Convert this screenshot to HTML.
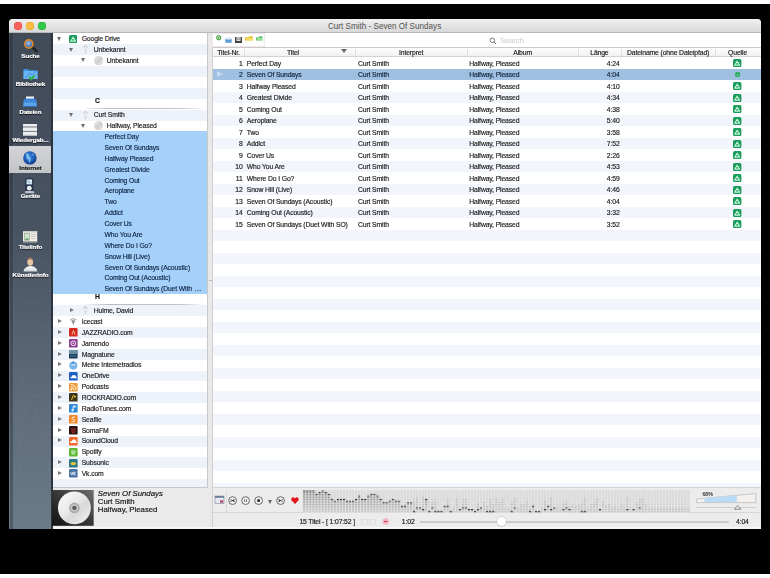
<!DOCTYPE html><html><head><meta charset="utf-8"><style>
*{margin:0;padding:0;box-sizing:border-box}
html,body{width:770px;height:578px;overflow:hidden;background:#000}
body{position:relative;font-family:"Liberation Sans",sans-serif;color:#1c1c1c}
.a{position:absolute}
.t{position:absolute;white-space:nowrap;font-size:6.8px;letter-spacing:-0.12px;line-height:8px;-webkit-text-stroke:0.16px currentColor}
.tri-d{position:absolute;width:0;height:0;border-left:2.9px solid transparent;border-right:2.9px solid transparent;border-top:4.6px solid #707070}
.tri-r{position:absolute;width:0;height:0;border-top:2.7px solid transparent;border-bottom:2.7px solid transparent;border-left:4.4px solid #7a7a7a}
.ic{position:absolute;width:8.5px;height:8.5px;border-radius:1.5px}
.sl{position:absolute;left:10px;width:41px;text-align:center;color:#fff;font-weight:bold;font-size:6.2px;line-height:7px;letter-spacing:-0.05px;-webkit-text-stroke:0.2px currentColor;text-shadow:0 0.5px 0.8px rgba(0,0,0,.9)}
</style></head><body><div style="position:absolute;left:0;top:0;width:770px;height:578px;filter:blur(0.35px)">
<div class="a" style="left:0;top:0;width:770px;height:3.7px;background:#fcfcfc"></div>
<div class="a" style="left:0;top:574.0px;width:770px;height:4px;background:#fcfcfc"></div>
<div class="a" style="left:9.3px;top:19.3px;width:751.3000000000001px;height:509.90000000000003px;background:#ececec;border-radius:4px 4px 0 0;overflow:hidden">
</div>
<div class="a" style="left:9.3px;top:19.3px;width:751.3000000000001px;height:13.599999999999998px;background:linear-gradient(#f0f0f0,#d9d9d9);border-radius:4px 4px 0 0;border-bottom:1px solid #b9b9b9"></div>
<div class="a" style="left:14.2px;top:22.400000000000002px;width:7.4px;height:7.4px;border-radius:50%;background:#fc605c;box-shadow:inset 0 0 0 0.4px #df4744"></div>
<div class="a" style="left:26.3px;top:22.400000000000002px;width:7.4px;height:7.4px;border-radius:50%;background:#fdbc40;box-shadow:inset 0 0 0 0.4px #de9f34"></div>
<div class="a" style="left:38.4px;top:22.400000000000002px;width:7.4px;height:7.4px;border-radius:50%;background:#34c84a;box-shadow:inset 0 0 0 0.4px #27aa35"></div>
<div class="t" style="left:327.9px;top:22.1px;font-size:8.14px;line-height:10px;letter-spacing:0;color:#505050;-webkit-text-stroke:0">Curt Smith - Seven Of Sundays</div>
<div class="a" style="left:9.3px;top:32.9px;width:42.7px;height:496.30000000000007px;background:linear-gradient(#414a57 0%,#485362 40%,#5e6c7b 75%,#6b7a89 100%)"></div>
<div class="a" style="left:51.0px;top:32.9px;width:1.6px;height:496.30000000000007px;background:#2e343c"></div>
<svg class="a" style="left:9.6px;top:32.9px" width="41.4" height="496" viewBox="0 0 41.4 496"><rect x="0" y="0" width="3.2" height="496" fill="#1e242c" opacity=".35"/><rect x="3.2" y="0" width="0.8" height="496" fill="#8a96a4" opacity=".18"/><g fill="none" stroke="#aab6c4" stroke-width=".7" opacity=".09"><path d="M2 60 q18 -20 40 5"/><path d="M0 110 q20 30 42 -10"/><path d="M4 170 q10 -30 38 -10"/><path d="M0 230 q25 -15 42 10"/><path d="M6 262 q15 20 36 -8"/><path d="M0 300 q18 -25 42 0"/><path d="M10 340 q10 40 32 10"/><path d="M0 380 q22 -30 42 -5"/><path d="M20 360 q-12 40 -10 80"/><path d="M24 370 q8 40 18 70"/><path d="M0 450 q20 -20 42 5"/><path d="M4 480 q20 -15 38 0"/></g></svg>
<div class="a" style="left:9.3px;top:146px;width:41.7px;height:27px;background:linear-gradient(#d3d4d7,#c2c4c8)"></div>
<div class="sl" style="top:51.70px;">Suche</div>
<div class="sl" style="top:80.40px;">Bibliothek</div>
<div class="sl" style="top:108.00px;">Dateien</div>
<div class="sl" style="top:136.10px;">Wiedergab...</div>
<div class="sl" style="top:164.10px;color:#1a1a1a;text-shadow:0 0.5px 0 rgba(255,255,255,.4);">Internet</div>
<div class="sl" style="top:192.40px;">Geräte</div>
<div class="sl" style="top:242.80px;">Titelinfo</div>
<div class="sl" style="top:271.00px;">Künstlerinfo</div>
<div class="a" style="left:53.0px;top:32.9px;width:154.5px;height:455.3px;background:#fff;overflow:hidden;border-bottom:1px solid #c8c8c8">
<div class="a" style="left:0;top:0.73px;width:160px;height:10.92px;background:#fff"></div>
<div class="a" style="left:0;top:11.60px;width:160px;height:10.92px;background:#eef3fb"></div>
<div class="a" style="left:0;top:22.46px;width:160px;height:10.92px;background:#fff"></div>
<div class="a" style="left:0;top:33.33px;width:160px;height:10.92px;background:#eef3fb"></div>
<div class="a" style="left:0;top:44.20px;width:160px;height:10.92px;background:#fff"></div>
<div class="a" style="left:0;top:55.07px;width:160px;height:10.92px;background:#eef3fb"></div>
<div class="a" style="left:0;top:65.93px;width:160px;height:10.92px;background:#fff"></div>
<div class="a" style="left:0;top:76.80px;width:160px;height:10.92px;background:#eef3fb"></div>
<div class="a" style="left:0;top:87.67px;width:160px;height:10.92px;background:#fff"></div>
<div class="a" style="left:0;top:98.53px;width:160px;height:10.92px;background:#a5d0fa"></div>
<div class="a" style="left:0;top:109.40px;width:160px;height:10.92px;background:#a5d0fa"></div>
<div class="a" style="left:0;top:120.27px;width:160px;height:10.92px;background:#a5d0fa"></div>
<div class="a" style="left:0;top:131.13px;width:160px;height:10.92px;background:#a5d0fa"></div>
<div class="a" style="left:0;top:142.00px;width:160px;height:10.92px;background:#a5d0fa"></div>
<div class="a" style="left:0;top:152.87px;width:160px;height:10.92px;background:#a5d0fa"></div>
<div class="a" style="left:0;top:163.74px;width:160px;height:10.92px;background:#a5d0fa"></div>
<div class="a" style="left:0;top:174.60px;width:160px;height:10.92px;background:#a5d0fa"></div>
<div class="a" style="left:0;top:185.47px;width:160px;height:10.92px;background:#a5d0fa"></div>
<div class="a" style="left:0;top:196.34px;width:160px;height:10.92px;background:#a5d0fa"></div>
<div class="a" style="left:0;top:207.20px;width:160px;height:10.92px;background:#a5d0fa"></div>
<div class="a" style="left:0;top:218.07px;width:160px;height:10.92px;background:#a5d0fa"></div>
<div class="a" style="left:0;top:228.94px;width:160px;height:10.92px;background:#a5d0fa"></div>
<div class="a" style="left:0;top:239.80px;width:160px;height:10.92px;background:#a5d0fa"></div>
<div class="a" style="left:0;top:250.67px;width:160px;height:10.92px;background:#a5d0fa"></div>
<div class="a" style="left:0;top:261.54px;width:160px;height:10.92px;background:#fff"></div>
<div class="a" style="left:0;top:272.41px;width:160px;height:10.92px;background:#eef3fb"></div>
<div class="a" style="left:0;top:283.27px;width:160px;height:10.92px;background:#fff"></div>
<div class="a" style="left:0;top:294.14px;width:160px;height:10.92px;background:#eef3fb"></div>
<div class="a" style="left:0;top:305.01px;width:160px;height:10.92px;background:#fff"></div>
<div class="a" style="left:0;top:315.87px;width:160px;height:10.92px;background:#eef3fb"></div>
<div class="a" style="left:0;top:326.74px;width:160px;height:10.92px;background:#fff"></div>
<div class="a" style="left:0;top:337.61px;width:160px;height:10.92px;background:#eef3fb"></div>
<div class="a" style="left:0;top:348.47px;width:160px;height:10.92px;background:#fff"></div>
<div class="a" style="left:0;top:359.34px;width:160px;height:10.92px;background:#eef3fb"></div>
<div class="a" style="left:0;top:370.21px;width:160px;height:10.92px;background:#fff"></div>
<div class="a" style="left:0;top:381.08px;width:160px;height:10.92px;background:#eef3fb"></div>
<div class="a" style="left:0;top:391.94px;width:160px;height:10.92px;background:#fff"></div>
<div class="a" style="left:0;top:402.81px;width:160px;height:10.92px;background:#eef3fb"></div>
<div class="a" style="left:0;top:413.68px;width:160px;height:10.92px;background:#fff"></div>
<div class="a" style="left:0;top:424.54px;width:160px;height:10.92px;background:#eef3fb"></div>
<div class="a" style="left:0;top:435.41px;width:160px;height:10.92px;background:#fff"></div>
<div class="a" style="left:0;top:446.28px;width:160px;height:10.92px;background:#eef3fb"></div>
<div class="tri-d" style="left:4.00px;top:3.76px"></div>
<svg class="a" style="left:15.7px;top:2.06px" width="8.6" height="8.2"><rect x="0" y="0" width="8.4" height="8.2" rx="1.6" fill="#1c9c5c"/><path d="M4.2 2.2 L6.6 6.1 H1.8 Z" fill="#1c9c5c" stroke="#c6f4da" stroke-width="1.1" stroke-linejoin="round"/></svg>
<div class="t" style="left:28.70px;top:2.46px;color:#1b1b1b">Google Drive</div>
<div class="tri-d" style="left:16.00px;top:14.63px"></div>
<svg class="a" style="left:30.30px;top:12.43px" width="5" height="9"><path d="M0.9 3 q0 -2.4 1.6 -2.4 q1.6 0 1.6 2.4" fill="#f3f3f3" stroke="#a9a9a9" stroke-width=".7"/><path d="M1.2 3.6 q1.3 1 2.6 0 l-0.5 4.6 h-1.6z" fill="#dcdcdc"/></svg>
<div class="t" style="left:40.70px;top:13.33px;color:#1b1b1b">Unbekannt</div>
<div class="tri-d" style="left:28.00px;top:25.50px"></div>
<svg class="a" style="left:40.50px;top:23.30px" width="9.2" height="9.2" viewBox="0 0 9.2 9.2"><defs><linearGradient id="dg2" x1="0" y1="0" x2="1" y2="1"><stop offset="0" stop-color="#f4f4f4"/><stop offset=".5" stop-color="#cfcfcf"/><stop offset="1" stop-color="#eeeeee"/></linearGradient></defs><circle cx="4.6" cy="4.6" r="4.4" fill="url(#dg2)" stroke="#c2c2c2" stroke-width=".4"/><circle cx="4.6" cy="4.6" r="1" fill="#e0e0e0" stroke="#b5b5b5" stroke-width=".3"/></svg>
<div class="t" style="left:53.70px;top:24.20px;color:#1b1b1b">Unbekannt</div>
<div class="t" style="left:42px;top:64.57px;font-weight:bold;color:#111">C</div>
<div class="a" style="left:30px;top:75.60px;width:122px;height:1px;background:linear-gradient(90deg,rgba(190,190,190,0),#bdbdbd 20%,#c4c4c4 80%,rgba(200,200,200,0))"></div>
<div class="tri-d" style="left:16.00px;top:79.83px"></div>
<svg class="a" style="left:30.30px;top:77.63px" width="5" height="9"><path d="M0.9 3 q0 -2.4 1.6 -2.4 q1.6 0 1.6 2.4" fill="#f3f3f3" stroke="#a9a9a9" stroke-width=".7"/><path d="M1.2 3.6 q1.3 1 2.6 0 l-0.5 4.6 h-1.6z" fill="#dcdcdc"/></svg>
<div class="t" style="left:40.70px;top:78.53px;color:#1b1b1b">Curt Smith</div>
<div class="tri-d" style="left:28.00px;top:90.70px"></div>
<svg class="a" style="left:40.50px;top:88.50px" width="9.2" height="9.2" viewBox="0 0 9.2 9.2"><defs><linearGradient id="dg8" x1="0" y1="0" x2="1" y2="1"><stop offset="0" stop-color="#f4f4f4"/><stop offset=".5" stop-color="#cfcfcf"/><stop offset="1" stop-color="#eeeeee"/></linearGradient></defs><circle cx="4.6" cy="4.6" r="4.4" fill="url(#dg8)" stroke="#c2c2c2" stroke-width=".4"/><circle cx="4.6" cy="4.6" r="1" fill="#e0e0e0" stroke="#b5b5b5" stroke-width=".3"/></svg>
<div class="t" style="left:53.70px;top:89.40px;color:#1b1b1b">Halfway, Pleased</div>
<div class="t" style="left:51.50px;top:100.27px;color:#0f2644">Perfect Day</div>
<div class="t" style="left:51.50px;top:111.13px;color:#0f2644">Seven Of Sundays</div>
<div class="t" style="left:51.50px;top:122.00px;color:#0f2644">Halfway Pleased</div>
<div class="t" style="left:51.50px;top:132.87px;color:#0f2644">Greatest Divide</div>
<div class="t" style="left:51.50px;top:143.73px;color:#0f2644">Coming Out</div>
<div class="t" style="left:51.50px;top:154.60px;color:#0f2644">Aeroplane</div>
<div class="t" style="left:51.50px;top:165.47px;color:#0f2644">Two</div>
<div class="t" style="left:51.50px;top:176.34px;color:#0f2644">Addict</div>
<div class="t" style="left:51.50px;top:187.20px;color:#0f2644">Cover Us</div>
<div class="t" style="left:51.50px;top:198.07px;color:#0f2644">Who You Are</div>
<div class="t" style="left:51.50px;top:208.94px;color:#0f2644">Where Do I Go?</div>
<div class="t" style="left:51.50px;top:219.80px;color:#0f2644">Snow Hill (Live)</div>
<div class="t" style="left:51.50px;top:230.67px;color:#0f2644">Seven Of Sundays (Acoustic)</div>
<div class="t" style="left:51.50px;top:241.54px;color:#0f2644">Coming Out (Acoustic)</div>
<div class="t" style="left:51.50px;top:252.40px;color:#0f2644">Seven Of Sundays (Duet With <span style="letter-spacing:0.5px;margin-left:0.8px">...</span></div>
<div class="t" style="left:42px;top:260.17px;font-weight:bold;color:#111">H</div>
<div class="a" style="left:30px;top:271.21px;width:122px;height:1px;background:linear-gradient(90deg,rgba(190,190,190,0),#bdbdbd 20%,#c4c4c4 80%,rgba(200,200,200,0))"></div>
<div class="tri-r" style="left:16.80px;top:275.14px"></div>
<svg class="a" style="left:30.30px;top:273.24px" width="5" height="9"><path d="M0.9 3 q0 -2.4 1.6 -2.4 q1.6 0 1.6 2.4" fill="#f3f3f3" stroke="#a9a9a9" stroke-width=".7"/><path d="M1.2 3.6 q1.3 1 2.6 0 l-0.5 4.6 h-1.6z" fill="#dcdcdc"/></svg>
<div class="t" style="left:40.70px;top:274.14px;color:#1b1b1b">Hulme, David</div>
<div class="tri-r" style="left:4.80px;top:286.01px"></div>
<svg class="a" style="left:15.7px;top:284.41px;overflow:visible" width="8.6" height="8.6"><path d="M4.3 8.2 L2.6 3.4 h3.4z" fill="#8d8d8d"/><path d="M1 3 q3.3 -3 6.6 0" stroke="#9a9a9a" stroke-width=".9" fill="none"/><path d="M2.3 4 q2 -1.8 4 0" stroke="#9a9a9a" stroke-width=".8" fill="none"/></svg>
<div class="t" style="left:28.70px;top:285.01px;color:#1b1b1b">Icecast</div>
<div class="tri-r" style="left:4.80px;top:296.87px"></div>
<svg class="a" style="left:15.7px;top:295.27px;overflow:visible" width="8.6" height="8.6"><rect width="8.6" height="8.6" rx="1.2" fill="#d42a20"/><path d="M3 6.5 l1.5 -4 l1.5 4" stroke="#f6c0a0" stroke-width=".9" fill="none"/></svg>
<div class="t" style="left:28.70px;top:295.87px;color:#1b1b1b">JAZZRADIO.com</div>
<div class="tri-r" style="left:4.80px;top:307.74px"></div>
<svg class="a" style="left:15.7px;top:306.14px;overflow:visible" width="8.6" height="8.6"><rect width="8.6" height="8.6" rx="1.2" fill="#8b3b91"/><circle cx="4.3" cy="4.3" r="2.4" fill="none" stroke="#fff" stroke-width=".9"/><circle cx="4.3" cy="4.3" r=".8" fill="#fff"/></svg>
<div class="t" style="left:28.70px;top:306.74px;color:#1b1b1b">Jamendo</div>
<div class="tri-r" style="left:4.80px;top:318.61px"></div>
<svg class="a" style="left:15.7px;top:317.01px;overflow:visible" width="8.6" height="8.6"><rect width="8.6" height="8.6" rx="1.2" fill="#1f3f55"/><path d="M0 1.2 q0 -1.2 1.2 -1.2 h6.2 q1.2 0 1.2 1.2 v2.8 h-8.6z" fill="#6f8fa6"/><rect x="1" y="4.8" width="6.6" height="2" fill="#2d5f80"/></svg>
<div class="t" style="left:28.70px;top:317.61px;color:#1b1b1b">Magnatune</div>
<div class="tri-r" style="left:4.80px;top:329.47px"></div>
<svg class="a" style="left:15.7px;top:327.87px;overflow:visible" width="8.6" height="8.6"><circle cx="4.3" cy="4.6" r="4.1" fill="#79b4ea"/><path d="M1.5 4.6 q2.8 -3.4 5.6 0" fill="#d6ebfb"/><circle cx="4.3" cy="1.6" r="1" fill="#3a7fc8"/></svg>
<div class="t" style="left:28.70px;top:328.47px;color:#1b1b1b">Meine Internetradios</div>
<div class="tri-r" style="left:4.80px;top:340.34px"></div>
<svg class="a" style="left:15.7px;top:338.74px;overflow:visible" width="8.6" height="8.6"><rect width="8.6" height="8.6" rx="1.2" fill="#1e5fc4"/><path d="M1.5 6.3 q-0.5 -1.8 1.4 -1.9 q0.6 -2 2.6 -1.1 q1.8 0 1.6 1.6 q1.2 0.5 0.4 1.4z" fill="#fff"/></svg>
<div class="t" style="left:28.70px;top:339.34px;color:#1b1b1b">OneDrive</div>
<div class="tri-r" style="left:4.80px;top:351.21px"></div>
<svg class="a" style="left:15.7px;top:349.61px;overflow:visible" width="8.6" height="8.6"><rect width="8.6" height="8.6" rx="1.2" fill="#ec9a36"/><circle cx="2.3" cy="6.4" r=".9" fill="#fff"/><path d="M1.6 3.8 q3.2 0 3.2 3.2" stroke="#fff" stroke-width=".9" fill="none"/><path d="M1.6 1.6 q5.4 0 5.4 5.4" stroke="#fff" stroke-width=".9" fill="none"/></svg>
<div class="t" style="left:28.70px;top:350.21px;color:#1b1b1b">Podcasts</div>
<div class="tri-r" style="left:4.80px;top:362.07px"></div>
<svg class="a" style="left:15.7px;top:360.47px;overflow:visible" width="8.6" height="8.6"><rect width="8.6" height="8.6" rx="1.2" fill="#3c3418"/><path d="M2.5 7 l2 -5 l1.5 2.5 l0.8 -1.5" stroke="#e8c030" stroke-width="1" fill="none"/></svg>
<div class="t" style="left:28.70px;top:361.07px;color:#1b1b1b">ROCKRADIO.com</div>
<div class="tri-r" style="left:4.80px;top:372.94px"></div>
<svg class="a" style="left:15.7px;top:371.34px;overflow:visible" width="8.6" height="8.6"><rect width="8.6" height="8.6" rx="1.2" fill="#2b87d3"/><path d="M4.2 6.3 v-4.3 h2.2 v1.2 h-1.2" stroke="#fff" stroke-width=".9" fill="none"/><circle cx="3.4" cy="6.3" r="1.1" fill="#fff"/></svg>
<div class="t" style="left:28.70px;top:371.94px;color:#1b1b1b">RadioTunes.com</div>
<div class="tri-r" style="left:4.80px;top:383.81px"></div>
<svg class="a" style="left:15.7px;top:382.21px;overflow:visible" width="8.6" height="8.6"><rect width="8.6" height="8.6" rx="1.2" fill="#f08826"/><path d="M6 2.2 q-2.8 -0.8 -3.2 1 q0 1 1.6 1.3 q1.6 0.4 1.4 1.4 q-0.4 1.4 -3.4 0.8" stroke="#fff" stroke-width=".9" fill="none"/></svg>
<div class="t" style="left:28.70px;top:382.81px;color:#1b1b1b">Seafile</div>
<div class="tri-r" style="left:4.80px;top:394.68px"></div>
<svg class="a" style="left:15.7px;top:393.08px;overflow:visible" width="8.6" height="8.6"><rect width="8.6" height="8.6" rx="1.2" fill="#231212"/><path d="M2 3 h4.6 M2 5 h4.6 M2.8 6.8 h3" stroke="#c83232" stroke-width=".9"/></svg>
<div class="t" style="left:28.70px;top:393.68px;color:#1b1b1b">SomaFM</div>
<div class="tri-r" style="left:4.80px;top:405.54px"></div>
<svg class="a" style="left:15.7px;top:403.94px;overflow:visible" width="8.6" height="8.6"><rect width="8.6" height="8.6" rx="1.2" fill="#f2682a"/><path d="M1.3 6 v-1.6 q0.6 -0.8 1.3 0 q0.4 -2 2.4 -2.2 q2 0.2 2.1 2.2 q1.1 0.3 0.6 1.6z" fill="#fff"/></svg>
<div class="t" style="left:28.70px;top:404.54px;color:#1b1b1b">SoundCloud</div>
<svg class="a" style="left:15.7px;top:414.81px;overflow:visible" width="8.6" height="8.6"><rect width="8.6" height="8.6" rx="1.2" fill="#5cb832"/><path d="M2 3.2 q2.6 -1 4.8 0.3 M2.3 4.7 q2.2 -0.8 4 0.3 M2.6 6.1 q1.8 -0.6 3.2 0.2" stroke="#fff" stroke-width=".8" fill="none"/></svg>
<div class="t" style="left:28.70px;top:415.41px;color:#1b1b1b">Spotify</div>
<div class="tri-r" style="left:4.80px;top:427.28px"></div>
<svg class="a" style="left:15.7px;top:425.68px;overflow:visible" width="8.6" height="8.6"><rect width="8.6" height="8.6" rx="1.2" fill="#2c7b84"/><ellipse cx="4.3" cy="4.6" rx="2.8" ry="1.6" fill="#e8c540"/></svg>
<div class="t" style="left:28.70px;top:426.28px;color:#1b1b1b">Subsonic</div>
<div class="tri-r" style="left:4.80px;top:438.14px"></div>
<svg class="a" style="left:15.7px;top:436.54px;overflow:visible" width="8.6" height="8.6"><rect width="8.6" height="8.6" rx="1.2" fill="#4a74a8"/><path d="M1.5 3 l1.3 3 l1.2 -3 M4.8 2.6 v3.6 M6.8 3 l-2 1.6 l2 1.6" stroke="#fff" stroke-width=".8" fill="none"/></svg>
<div class="t" style="left:28.70px;top:437.14px;color:#1b1b1b">Vk.com</div>
</div>
<div class="a" style="left:207.5px;top:32.9px;width:5.099999999999994px;height:496.30000000000007px;background:#e9e9e9"></div>
<div class="a" style="left:211.8px;top:32.9px;width:1px;height:496.30000000000007px;background:#d0d0d0"></div>
<div class="a" style="left:207px;top:32.9px;width:1px;height:455.3px;background:#c8c8c8"></div>
<div class="a" style="left:208.6px;top:279.8px;width:3px;height:1.4px;background:#b5b5b5"></div>
<div class="a" style="left:212.6px;top:32.9px;width:548.0px;height:454.3px;background:#fff;overflow:hidden">
<div class="a" style="left:0;top:0;width:548.0px;height:14.899999999999999px;background:#fff;border-bottom:1px solid #c9c9c9"></div>
<div class="a" style="left:0;top:14.90px;width:548.0px;height:9.65px;background:linear-gradient(#fdfdfd,#f1f1f1);border-bottom:1px solid #d3d3d3"></div>
<div class="a" style="left:31.40px;top:15.90px;width:1px;height:7.65px;background:#dcdcdc"></div>
<div class="t" style="left:4.70px;top:15.63px">Titel-Nr.</div>
<div class="a" style="left:142.40px;top:15.90px;width:1px;height:7.65px;background:#dcdcdc"></div>
<div class="t" style="left:31.40px;width:98.00px;text-align:center;top:15.63px">Titel</div>
<div class="a" style="left:254.70px;top:15.90px;width:1px;height:7.65px;background:#dcdcdc"></div>
<div class="t" style="left:142.40px;width:112.30px;text-align:center;top:15.63px">Interpret</div>
<div class="a" style="left:365.40px;top:15.90px;width:1px;height:7.65px;background:#dcdcdc"></div>
<div class="t" style="left:254.70px;width:110.70px;text-align:center;top:15.63px">Album</div>
<div class="a" style="left:408.20px;top:15.90px;width:1px;height:7.65px;background:#dcdcdc"></div>
<div class="t" style="left:365.40px;width:42.80px;text-align:center;top:15.63px">Länge</div>
<div class="a" style="left:502.40px;top:15.90px;width:1px;height:7.65px;background:#dcdcdc"></div>
<div class="t" style="left:414.40px;top:15.63px">Dateiname (ohne Dateipfad)</div>
<div class="t" style="left:502.40px;width:45.20px;text-align:center;top:15.63px">Quelle</div>
<div class="a" style="left:128.80px;top:16.30px;width:0;height:0;border-left:3px solid transparent;border-right:3px solid transparent;border-top:4.4px solid #666"></div>
<div class="a" style="left:0;top:24.55px;width:548.0px;height:11.52px;background:#fff"></div>
<div class="a" style="left:0;top:36.05px;width:548.0px;height:11.52px;background:#9fc0e1"></div>
<div class="a" style="left:0;top:47.55px;width:548.0px;height:11.52px;background:#fff"></div>
<div class="a" style="left:0;top:59.05px;width:548.0px;height:11.52px;background:#f2f6fc"></div>
<div class="a" style="left:0;top:70.55px;width:548.0px;height:11.52px;background:#fff"></div>
<div class="a" style="left:0;top:82.05px;width:548.0px;height:11.52px;background:#f2f6fc"></div>
<div class="a" style="left:0;top:93.55px;width:548.0px;height:11.52px;background:#fff"></div>
<div class="a" style="left:0;top:105.05px;width:548.0px;height:11.52px;background:#f2f6fc"></div>
<div class="a" style="left:0;top:116.55px;width:548.0px;height:11.52px;background:#fff"></div>
<div class="a" style="left:0;top:128.05px;width:548.0px;height:11.52px;background:#f2f6fc"></div>
<div class="a" style="left:0;top:139.55px;width:548.0px;height:11.52px;background:#fff"></div>
<div class="a" style="left:0;top:151.05px;width:548.0px;height:11.52px;background:#f2f6fc"></div>
<div class="a" style="left:0;top:162.55px;width:548.0px;height:11.52px;background:#fff"></div>
<div class="a" style="left:0;top:174.05px;width:548.0px;height:11.52px;background:#f2f6fc"></div>
<div class="a" style="left:0;top:185.55px;width:548.0px;height:11.52px;background:#fff"></div>
<div class="a" style="left:0;top:197.05px;width:548.0px;height:11.52px;background:#f2f6fc"></div>
<div class="a" style="left:0;top:208.55px;width:548.0px;height:11.52px;background:#fff"></div>
<div class="a" style="left:0;top:220.05px;width:548.0px;height:11.52px;background:#f2f6fc"></div>
<div class="a" style="left:0;top:231.55px;width:548.0px;height:11.52px;background:#fff"></div>
<div class="a" style="left:0;top:243.05px;width:548.0px;height:11.52px;background:#f2f6fc"></div>
<div class="a" style="left:0;top:254.55px;width:548.0px;height:11.52px;background:#fff"></div>
<div class="a" style="left:0;top:266.05px;width:548.0px;height:11.52px;background:#f2f6fc"></div>
<div class="a" style="left:0;top:277.55px;width:548.0px;height:11.52px;background:#fff"></div>
<div class="a" style="left:0;top:289.05px;width:548.0px;height:11.52px;background:#f2f6fc"></div>
<div class="a" style="left:0;top:300.55px;width:548.0px;height:11.52px;background:#fff"></div>
<div class="a" style="left:0;top:312.05px;width:548.0px;height:11.52px;background:#f2f6fc"></div>
<div class="a" style="left:0;top:323.55px;width:548.0px;height:11.52px;background:#fff"></div>
<div class="a" style="left:0;top:335.05px;width:548.0px;height:11.52px;background:#f2f6fc"></div>
<div class="a" style="left:0;top:346.55px;width:548.0px;height:11.52px;background:#fff"></div>
<div class="a" style="left:0;top:358.05px;width:548.0px;height:11.52px;background:#f2f6fc"></div>
<div class="a" style="left:0;top:369.55px;width:548.0px;height:11.52px;background:#fff"></div>
<div class="a" style="left:0;top:381.05px;width:548.0px;height:11.52px;background:#f2f6fc"></div>
<div class="a" style="left:0;top:392.55px;width:548.0px;height:11.52px;background:#fff"></div>
<div class="a" style="left:0;top:404.05px;width:548.0px;height:11.52px;background:#f2f6fc"></div>
<div class="a" style="left:0;top:415.55px;width:548.0px;height:11.52px;background:#fff"></div>
<div class="a" style="left:0;top:427.05px;width:548.0px;height:11.52px;background:#f2f6fc"></div>
<div class="a" style="left:0;top:438.55px;width:548.0px;height:11.52px;background:#fff"></div>
<div class="a" style="left:0;top:450.05px;width:548.0px;height:11.52px;background:#f2f6fc"></div>
<div class="t" style="left:5.40px;width:24.60px;text-align:right;top:26.90px;color:#1c1c1c">1</div>
<div class="t" style="left:34.20px;top:26.90px;color:#1c1c1c">Perfect Day</div>
<div class="t" style="left:145.40px;top:26.90px;color:#1c1c1c">Curt Smith</div>
<div class="t" style="left:256.70px;top:26.90px;color:#1c1c1c">Halfway, Pleased</div>
<div class="t" style="left:377.40px;width:29.60px;text-align:right;top:26.90px;color:#1c1c1c">4:24</div>
<svg class="a" style="left:520.60px;top:26.30px" width="8.6" height="8.2"><rect x="0" y="0" width="8.4" height="8.2" rx="1.6" fill="#1c9c5c"/><path d="M4.2 2.2 L6.6 6.1 H1.8 Z" fill="#1c9c5c" stroke="#c6f4da" stroke-width="1.1" stroke-linejoin="round"/></svg>
<div class="t" style="left:5.40px;width:24.60px;text-align:right;top:38.40px;color:#10243a">2</div>
<div class="t" style="left:34.20px;top:38.40px;color:#10243a">Seven Of Sundays</div>
<div class="t" style="left:145.40px;top:38.40px;color:#10243a">Curt Smith</div>
<div class="t" style="left:256.70px;top:38.40px;color:#10243a">Halfway, Pleased</div>
<div class="t" style="left:377.40px;width:29.60px;text-align:right;top:38.40px;color:#10243a">4:04</div>
<svg class="a" style="left:522.40px;top:39.20px" width="5.2" height="5.2"><rect width="5.2" height="5.2" rx="0.8" fill="#1a9e5c" stroke="#bfe8d0" stroke-width=".5"/><path d="M2.6 1.3 L3.9 3.7 H1.3Z" fill="#7fe0b0"/></svg>
<div class="a" style="left:4.90px;top:38.30px;width:0;height:0;border-top:3.5px solid transparent;border-bottom:3.5px solid transparent;border-left:6px solid #c6dcf2"></div>
<div class="t" style="left:5.40px;width:24.60px;text-align:right;top:49.90px;color:#1c1c1c">3</div>
<div class="t" style="left:34.20px;top:49.90px;color:#1c1c1c">Halfway Pleased</div>
<div class="t" style="left:145.40px;top:49.90px;color:#1c1c1c">Curt Smith</div>
<div class="t" style="left:256.70px;top:49.90px;color:#1c1c1c">Halfway, Pleased</div>
<div class="t" style="left:377.40px;width:29.60px;text-align:right;top:49.90px;color:#1c1c1c">4:10</div>
<svg class="a" style="left:520.60px;top:49.30px" width="8.6" height="8.2"><rect x="0" y="0" width="8.4" height="8.2" rx="1.6" fill="#1c9c5c"/><path d="M4.2 2.2 L6.6 6.1 H1.8 Z" fill="#1c9c5c" stroke="#c6f4da" stroke-width="1.1" stroke-linejoin="round"/></svg>
<div class="t" style="left:5.40px;width:24.60px;text-align:right;top:61.40px;color:#1c1c1c">4</div>
<div class="t" style="left:34.20px;top:61.40px;color:#1c1c1c">Greatest Divide</div>
<div class="t" style="left:145.40px;top:61.40px;color:#1c1c1c">Curt Smith</div>
<div class="t" style="left:256.70px;top:61.40px;color:#1c1c1c">Halfway, Pleased</div>
<div class="t" style="left:377.40px;width:29.60px;text-align:right;top:61.40px;color:#1c1c1c">4:34</div>
<svg class="a" style="left:520.60px;top:60.80px" width="8.6" height="8.2"><rect x="0" y="0" width="8.4" height="8.2" rx="1.6" fill="#1c9c5c"/><path d="M4.2 2.2 L6.6 6.1 H1.8 Z" fill="#1c9c5c" stroke="#c6f4da" stroke-width="1.1" stroke-linejoin="round"/></svg>
<div class="t" style="left:5.40px;width:24.60px;text-align:right;top:72.90px;color:#1c1c1c">5</div>
<div class="t" style="left:34.20px;top:72.90px;color:#1c1c1c">Coming Out</div>
<div class="t" style="left:145.40px;top:72.90px;color:#1c1c1c">Curt Smith</div>
<div class="t" style="left:256.70px;top:72.90px;color:#1c1c1c">Halfway, Pleased</div>
<div class="t" style="left:377.40px;width:29.60px;text-align:right;top:72.90px;color:#1c1c1c">4:38</div>
<svg class="a" style="left:520.60px;top:72.30px" width="8.6" height="8.2"><rect x="0" y="0" width="8.4" height="8.2" rx="1.6" fill="#1c9c5c"/><path d="M4.2 2.2 L6.6 6.1 H1.8 Z" fill="#1c9c5c" stroke="#c6f4da" stroke-width="1.1" stroke-linejoin="round"/></svg>
<div class="t" style="left:5.40px;width:24.60px;text-align:right;top:84.40px;color:#1c1c1c">6</div>
<div class="t" style="left:34.20px;top:84.40px;color:#1c1c1c">Aeroplane</div>
<div class="t" style="left:145.40px;top:84.40px;color:#1c1c1c">Curt Smith</div>
<div class="t" style="left:256.70px;top:84.40px;color:#1c1c1c">Halfway, Pleased</div>
<div class="t" style="left:377.40px;width:29.60px;text-align:right;top:84.40px;color:#1c1c1c">5:40</div>
<svg class="a" style="left:520.60px;top:83.80px" width="8.6" height="8.2"><rect x="0" y="0" width="8.4" height="8.2" rx="1.6" fill="#1c9c5c"/><path d="M4.2 2.2 L6.6 6.1 H1.8 Z" fill="#1c9c5c" stroke="#c6f4da" stroke-width="1.1" stroke-linejoin="round"/></svg>
<div class="t" style="left:5.40px;width:24.60px;text-align:right;top:95.90px;color:#1c1c1c">7</div>
<div class="t" style="left:34.20px;top:95.90px;color:#1c1c1c">Two</div>
<div class="t" style="left:145.40px;top:95.90px;color:#1c1c1c">Curt Smith</div>
<div class="t" style="left:256.70px;top:95.90px;color:#1c1c1c">Halfway, Pleased</div>
<div class="t" style="left:377.40px;width:29.60px;text-align:right;top:95.90px;color:#1c1c1c">3:58</div>
<svg class="a" style="left:520.60px;top:95.30px" width="8.6" height="8.2"><rect x="0" y="0" width="8.4" height="8.2" rx="1.6" fill="#1c9c5c"/><path d="M4.2 2.2 L6.6 6.1 H1.8 Z" fill="#1c9c5c" stroke="#c6f4da" stroke-width="1.1" stroke-linejoin="round"/></svg>
<div class="t" style="left:5.40px;width:24.60px;text-align:right;top:107.40px;color:#1c1c1c">8</div>
<div class="t" style="left:34.20px;top:107.40px;color:#1c1c1c">Addict</div>
<div class="t" style="left:145.40px;top:107.40px;color:#1c1c1c">Curt Smith</div>
<div class="t" style="left:256.70px;top:107.40px;color:#1c1c1c">Halfway, Pleased</div>
<div class="t" style="left:377.40px;width:29.60px;text-align:right;top:107.40px;color:#1c1c1c">7:52</div>
<svg class="a" style="left:520.60px;top:106.80px" width="8.6" height="8.2"><rect x="0" y="0" width="8.4" height="8.2" rx="1.6" fill="#1c9c5c"/><path d="M4.2 2.2 L6.6 6.1 H1.8 Z" fill="#1c9c5c" stroke="#c6f4da" stroke-width="1.1" stroke-linejoin="round"/></svg>
<div class="t" style="left:5.40px;width:24.60px;text-align:right;top:118.90px;color:#1c1c1c">9</div>
<div class="t" style="left:34.20px;top:118.90px;color:#1c1c1c">Cover Us</div>
<div class="t" style="left:145.40px;top:118.90px;color:#1c1c1c">Curt Smith</div>
<div class="t" style="left:256.70px;top:118.90px;color:#1c1c1c">Halfway, Pleased</div>
<div class="t" style="left:377.40px;width:29.60px;text-align:right;top:118.90px;color:#1c1c1c">2:26</div>
<svg class="a" style="left:520.60px;top:118.30px" width="8.6" height="8.2"><rect x="0" y="0" width="8.4" height="8.2" rx="1.6" fill="#1c9c5c"/><path d="M4.2 2.2 L6.6 6.1 H1.8 Z" fill="#1c9c5c" stroke="#c6f4da" stroke-width="1.1" stroke-linejoin="round"/></svg>
<div class="t" style="left:5.40px;width:24.60px;text-align:right;top:130.40px;color:#1c1c1c">10</div>
<div class="t" style="left:34.20px;top:130.40px;color:#1c1c1c">Who You Are</div>
<div class="t" style="left:145.40px;top:130.40px;color:#1c1c1c">Curt Smith</div>
<div class="t" style="left:256.70px;top:130.40px;color:#1c1c1c">Halfway, Pleased</div>
<div class="t" style="left:377.40px;width:29.60px;text-align:right;top:130.40px;color:#1c1c1c">4:53</div>
<svg class="a" style="left:520.60px;top:129.80px" width="8.6" height="8.2"><rect x="0" y="0" width="8.4" height="8.2" rx="1.6" fill="#1c9c5c"/><path d="M4.2 2.2 L6.6 6.1 H1.8 Z" fill="#1c9c5c" stroke="#c6f4da" stroke-width="1.1" stroke-linejoin="round"/></svg>
<div class="t" style="left:5.40px;width:24.60px;text-align:right;top:141.90px;color:#1c1c1c">11</div>
<div class="t" style="left:34.20px;top:141.90px;color:#1c1c1c">Where Do I Go?</div>
<div class="t" style="left:145.40px;top:141.90px;color:#1c1c1c">Curt Smith</div>
<div class="t" style="left:256.70px;top:141.90px;color:#1c1c1c">Halfway, Pleased</div>
<div class="t" style="left:377.40px;width:29.60px;text-align:right;top:141.90px;color:#1c1c1c">4:59</div>
<svg class="a" style="left:520.60px;top:141.30px" width="8.6" height="8.2"><rect x="0" y="0" width="8.4" height="8.2" rx="1.6" fill="#1c9c5c"/><path d="M4.2 2.2 L6.6 6.1 H1.8 Z" fill="#1c9c5c" stroke="#c6f4da" stroke-width="1.1" stroke-linejoin="round"/></svg>
<div class="t" style="left:5.40px;width:24.60px;text-align:right;top:153.40px;color:#1c1c1c">12</div>
<div class="t" style="left:34.20px;top:153.40px;color:#1c1c1c">Snow Hill (Live)</div>
<div class="t" style="left:145.40px;top:153.40px;color:#1c1c1c">Curt Smith</div>
<div class="t" style="left:256.70px;top:153.40px;color:#1c1c1c">Halfway, Pleased</div>
<div class="t" style="left:377.40px;width:29.60px;text-align:right;top:153.40px;color:#1c1c1c">4:46</div>
<svg class="a" style="left:520.60px;top:152.80px" width="8.6" height="8.2"><rect x="0" y="0" width="8.4" height="8.2" rx="1.6" fill="#1c9c5c"/><path d="M4.2 2.2 L6.6 6.1 H1.8 Z" fill="#1c9c5c" stroke="#c6f4da" stroke-width="1.1" stroke-linejoin="round"/></svg>
<div class="t" style="left:5.40px;width:24.60px;text-align:right;top:164.90px;color:#1c1c1c">13</div>
<div class="t" style="left:34.20px;top:164.90px;color:#1c1c1c">Seven Of Sundays (Acoustic)</div>
<div class="t" style="left:145.40px;top:164.90px;color:#1c1c1c">Curt Smith</div>
<div class="t" style="left:256.70px;top:164.90px;color:#1c1c1c">Halfway, Pleased</div>
<div class="t" style="left:377.40px;width:29.60px;text-align:right;top:164.90px;color:#1c1c1c">4:04</div>
<svg class="a" style="left:520.60px;top:164.30px" width="8.6" height="8.2"><rect x="0" y="0" width="8.4" height="8.2" rx="1.6" fill="#1c9c5c"/><path d="M4.2 2.2 L6.6 6.1 H1.8 Z" fill="#1c9c5c" stroke="#c6f4da" stroke-width="1.1" stroke-linejoin="round"/></svg>
<div class="t" style="left:5.40px;width:24.60px;text-align:right;top:176.40px;color:#1c1c1c">14</div>
<div class="t" style="left:34.20px;top:176.40px;color:#1c1c1c">Coming Out (Acoustic)</div>
<div class="t" style="left:145.40px;top:176.40px;color:#1c1c1c">Curt Smith</div>
<div class="t" style="left:256.70px;top:176.40px;color:#1c1c1c">Halfway, Pleased</div>
<div class="t" style="left:377.40px;width:29.60px;text-align:right;top:176.40px;color:#1c1c1c">3:32</div>
<svg class="a" style="left:520.60px;top:175.80px" width="8.6" height="8.2"><rect x="0" y="0" width="8.4" height="8.2" rx="1.6" fill="#1c9c5c"/><path d="M4.2 2.2 L6.6 6.1 H1.8 Z" fill="#1c9c5c" stroke="#c6f4da" stroke-width="1.1" stroke-linejoin="round"/></svg>
<div class="t" style="left:5.40px;width:24.60px;text-align:right;top:187.90px;color:#1c1c1c">15</div>
<div class="t" style="left:34.20px;top:187.90px;color:#1c1c1c">Seven Of Sundays (Duet With SO)</div>
<div class="t" style="left:145.40px;top:187.90px;color:#1c1c1c">Curt Smith</div>
<div class="t" style="left:256.70px;top:187.90px;color:#1c1c1c">Halfway, Pleased</div>
<div class="t" style="left:377.40px;width:29.60px;text-align:right;top:187.90px;color:#1c1c1c">3:52</div>
<svg class="a" style="left:520.60px;top:187.30px" width="8.6" height="8.2"><rect x="0" y="0" width="8.4" height="8.2" rx="1.6" fill="#1c9c5c"/><path d="M4.2 2.2 L6.6 6.1 H1.8 Z" fill="#1c9c5c" stroke="#c6f4da" stroke-width="1.1" stroke-linejoin="round"/></svg>
</div>
<div class="a" style="left:52.6px;top:487.8px;width:155.5px;height:41.40px;background:#ebebeb"></div>
<svg class="a" style="left:52.3px;top:490.2px" width="41.7" height="35.8" viewBox="0 0 41.7 35.8"><defs><linearGradient id="fr" x1="0" y1="1" x2="1" y2="0"><stop offset="0" stop-color="#111"/><stop offset=".55" stop-color="#3c3c3c"/><stop offset="1" stop-color="#707070"/></linearGradient><linearGradient id="cd" x1="0" y1="0" x2="1" y2="1"><stop offset="0" stop-color="#fafafa"/><stop offset=".45" stop-color="#e9e9e9"/><stop offset=".6" stop-color="#d9d9d9"/><stop offset="1" stop-color="#f4f4f4"/></linearGradient></defs><rect width="41.7" height="35.8" fill="url(#fr)"/><circle cx="22.4" cy="17.9" r="16.4" fill="url(#cd)"/><circle cx="22.4" cy="17.9" r="5.3" fill="#a9a9a9"/><circle cx="22.4" cy="17.9" r="3.6" fill="#c9c9c9"/><circle cx="22.4" cy="17.9" r="2.2" fill="#5a5a5a"/></svg>
<div class="t" style="left:97.8px;top:489.1px;font-size:7.8px;line-height:9px;letter-spacing:0;font-style:italic;color:#111">Seven Of Sundays</div>
<div class="t" style="left:97.8px;top:497.2px;font-size:7.8px;line-height:9px;letter-spacing:0;color:#111">Curt Smith</div>
<div class="t" style="left:97.8px;top:505.1px;font-size:7.8px;line-height:9px;letter-spacing:0;color:#111">Halfway, Pleased</div>
<div class="a" style="left:212.6px;top:487.2px;width:548.0px;height:42.00000000000006px;background:#ececec"></div>
<div class="a" style="left:212.6px;top:512.2px;width:548.0px;height:1px;background:#d8d8d8"></div>
<div class="a" style="left:212.6px;top:487.1px;width:548.0px;height:1px;background:#d2d2d2"></div>
<div class="a" style="left:52.6px;top:526.6px;width:708.0px;height:2.60px;background:#f7f7f7"></div>
<svg class="a" style="left:22px;top:37px;overflow:visible" width="16" height="16" viewBox="0 0 16 16"><defs><radialGradient id="mg" cx="45%" cy="40%" r="60%"><stop offset="0" stop-color="#9fc4ee"/><stop offset="1" stop-color="#2d5fa0"/></radialGradient></defs><line x1="10.5" y1="10.5" x2="14.8" y2="14.3" stroke="#222" stroke-width="2.4" stroke-linecap="round"/><circle cx="6.8" cy="6.9" r="4.1" fill="url(#mg)" stroke="#d9852c" stroke-width="1.7"/></svg>
<svg class="a" style="left:22.8px;top:66.5px;overflow:visible" width="15" height="13" viewBox="0 0 15 13"><path d="M0.5 2 h4.5 l1 1.2 h8.5 v8.8 h-14 z" fill="#3f8fe0"/><path d="M0.5 4 h14 v8 h-14z" fill="#68b4f4"/><path d="M2 11 L7 6 L9 8 L13 4" stroke="#2a6fc0" stroke-width="1" fill="none" opacity=".6"/><path d="M6 9.5 l2.2 2.8 l3.5 -4" stroke="#2fae3a" stroke-width="1.8" fill="none"/></svg>
<svg class="a" style="left:23.2px;top:95.8px;overflow:visible" width="14" height="11.5" viewBox="0 0 14 11.5"><path d="M3 0.5 h8 v4 h-8z" fill="#f2f6fa"/><path d="M0.5 4.5 L2.5 2.5 h9 l2 2 v6.5 h-13z" fill="#3d85d6"/><path d="M0.5 6.5 h13 v4.5 h-13z" fill="#5aa3ea"/><path d="M1 10 h12 v1 h-12z" fill="#2d6bb5"/></svg>
<svg class="a" style="left:23.3px;top:123.8px;overflow:visible" width="14" height="11.7" viewBox="0 0 14 11.7"><rect x="0" y="0" width="14" height="11.7" fill="#eceef0"/><rect x="0" y="2.4" width="14" height="1.1" fill="#7c838c"/><rect x="0" y="6.9" width="14" height="1.1" fill="#7c838c"/><rect x="0" y="10.9" width="14" height=".8" fill="#b8bcc0"/></svg>
<svg class="a" style="left:23.0px;top:150.6px;overflow:visible" width="13.8" height="13.8" viewBox="0 0 13.8 13.8"><defs><radialGradient id="gl" cx="45%" cy="40%" r="65%"><stop offset="0" stop-color="#3f86dc"/><stop offset=".6" stop-color="#1f5cb8"/><stop offset="1" stop-color="#0c2f72"/></radialGradient></defs><circle cx="6.9" cy="6.9" r="6.7" fill="url(#gl)"/><path d="M3.2 2.6 q1.6 -0.8 2.6 0.4 q-0.6 1.6 0.8 2.6 q1.6 1.2 1.2 3.2 q-0.4 2 -1.2 3.2 q-1 -1.6 -1.2 -3.2 q-1.8 -0.8 -2.2 -2.6 q-0.3 -1.8 0 -3.6z" fill="#86c8f4" opacity=".85"/><path d="M8.8 2.2 q1.8 0.6 2.6 2.2 q-1 0.2 -1.8 -0.4z" fill="#86c8f4" opacity=".7"/></svg>
<svg class="a" style="left:25.2px;top:178px;overflow:visible" width="9" height="16" viewBox="0 0 9 16"><rect x="0.3" y="0.3" width="8" height="14" rx="1" fill="#23324a"/><rect x="1.5" y="1.4" width="5.6" height="5" fill="#d9e8f6"/><path d="M2 2.5 l3.5 2.5" stroke="#6d8fb5" stroke-width=".8"/><circle cx="4.3" cy="10.2" r="2.4" fill="#f2f4f6"/><circle cx="4.3" cy="10.2" r=".8" fill="#b9c2cc"/><path d="M0 13 h8.5 l1 2.2 h-9.5z" fill="#dfe3e7" opacity=".8"/></svg>
<svg class="a" style="left:22.9px;top:230.7px;overflow:visible" width="14.2" height="11.3" viewBox="0 0 14.2 11.3"><rect x="0" y="0" width="14.2" height="11.3" fill="#f0efe8"/><rect x="0" y="0" width="14.2" height="1.5" fill="#c9c9c4"/><rect x="1.5" y="2.6" width="5" height="6.5" fill="#d5e3d5" stroke="#6a9a6a" stroke-width=".5"/><path d="M2.2 8.8 q1.8 -3.2 3.6 0" fill="#3c8c3c"/><rect x="8" y="3" width="5" height="0.8" fill="#bbb"/><rect x="8" y="5" width="5" height="0.8" fill="#bbb"/><rect x="8" y="7" width="4" height="0.8" fill="#bbb"/><rect x="0" y="10.3" width="14.2" height="1" fill="#8a8a86"/></svg>
<svg class="a" style="left:23.3px;top:256.5px;overflow:visible" width="14.5" height="15" viewBox="0 0 14.5 15"><defs><linearGradient id="pb" x1="0" y1="0" x2="0" y2="1"><stop offset="0" stop-color="#fbfbfb"/><stop offset="1" stop-color="#d4d8dc"/></linearGradient></defs><path d="M0.5 14.6 q0.5 -5 7 -5.5 q6.5 0.5 6.8 5.5z" fill="url(#pb)"/><ellipse cx="7.2" cy="5" rx="2.9" ry="3.8" fill="#e8c7a8"/><path d="M4.3 4 q0.3 -3.6 2.9 -3.6 q2.6 0 2.9 3.6 q-1 -1.8 -2.9 -1.8 q-1.9 0 -2.9 1.8z" fill="#a07458"/></svg>
<div class="a" style="left:212.4px;top:32.9px;width:53px;height:14.6px;border:1px solid #f3e6ee"></div>
<svg class="a" style="left:216.3px;top:35.2px;overflow:visible" width="5.4" height="5.4" viewBox="0 0 5.4 5.4"><circle cx="2.7" cy="2.7" r="2.2" fill="#bfe6b5" stroke="#3a9a3a" stroke-width="1"/><circle cx="2.7" cy="2.7" r="0.8" fill="#3a9a3a"/></svg>
<svg class="a" style="left:224.5px;top:36.8px;overflow:visible" width="7" height="6" viewBox="0 0 7 6"><path d="M0.3 2 q3.2 -2.5 6.4 0 v3.7 h-6.4z" fill="#5d9ad8"/><rect x="1.2" y="0.6" width="4.6" height="2" fill="#dfeaf5"/></svg>
<svg class="a" style="left:235px;top:37px;overflow:visible" width="7" height="6" viewBox="0 0 7 6"><rect x="0" y="0" width="1.6" height="6" fill="#444"/><rect x="5.4" y="0" width="1.6" height="6" fill="#444"/><rect x="0" y="4" width="7" height="2" fill="#444"/><rect x="1.6" y="0.3" width="3.8" height="3" fill="#aaa"/></svg>
<svg class="a" style="left:244.6px;top:36.3px;overflow:visible" width="8" height="4.6" viewBox="0 0 8 4.6"><path d="M0 1.2 h3.2 l1 -1 h3.6 v4.2 h-7.8z" fill="#e8c53a"/><path d="M1.5 2 h6 v2.4 h-6z" fill="#f5dc6a"/></svg>
<svg class="a" style="left:255.6px;top:36.3px;overflow:visible" width="6.5" height="4.6" viewBox="0 0 6.5 4.6"><path d="M0 1.2 h2.8 l1 -1 h2.7 v4.2 h-6.5z" fill="#64c46a"/><path d="M1.3 2 h5 v2.4 h-5z" fill="#9ee0a0"/></svg>
<svg class="a" style="left:489.4px;top:36.8px;overflow:visible" width="8" height="8" viewBox="0 0 8 8"><circle cx="3.3" cy="3.3" r="2.3" fill="none" stroke="#6f6f6f" stroke-width=".9"/><line x1="5" y1="5" x2="7" y2="7" stroke="#6f6f6f" stroke-width="1"/></svg>
<div class="t" style="left:500.2px;top:37.4px;font-size:7.5px;letter-spacing:0;color:#cfcfcf;-webkit-text-stroke:0.1px #cfcfcf">Search</div>
<svg class="a" style="left:214.9px;top:496.4px;overflow:visible" width="9" height="7.5" viewBox="0 0 9 7.5"><rect x="0" y="0" width="9" height="7.5" fill="#e9e9ef" stroke="#7d8aa0" stroke-width=".6"/><rect x="0" y="0" width="9" height="1.8" fill="#6c7f9a"/><rect x="5" y="4.3" width="3.3" height="2.5" fill="#b4547a"/></svg>
<div class="a" style="left:225.8px;top:490px;width:1px;height:22px;background:#dadada"></div>
<svg class="a" style="left:228.4px;top:495.7px;overflow:visible" width="9.2" height="9.2" viewBox="0 0 9.2 9.2"><circle cx="4.6" cy="4.6" r="3.9" fill="#f2f2f2" stroke="#5a5a5a" stroke-width=".9"/><rect x="2.7" y="3" width=".7" height="3.2" fill="#333"/><path d="M6.4 3 v3.2 l-2.7 -1.6z" fill="#333"/></svg>
<svg class="a" style="left:241.3px;top:495.7px;overflow:visible" width="9.2" height="9.2" viewBox="0 0 9.2 9.2"><circle cx="4.6" cy="4.6" r="3.9" fill="#f2f2f2" stroke="#5a5a5a" stroke-width=".9"/><rect x="3.3" y="3.2" width=".8" height="2.8" fill="#555"/><rect x="5.1" y="3.2" width=".8" height="2.8" fill="#555"/></svg>
<svg class="a" style="left:253.9px;top:495.7px;overflow:visible" width="9.2" height="9.2" viewBox="0 0 9.2 9.2"><circle cx="4.6" cy="4.6" r="3.9" fill="#f2f2f2" stroke="#5a5a5a" stroke-width=".9"/><rect x="3.3" y="3.3" width="2.6" height="2.6" fill="#222"/></svg>
<svg class="a" style="left:275.79999999999995px;top:495.7px;overflow:visible" width="9.2" height="9.2" viewBox="0 0 9.2 9.2"><circle cx="4.6" cy="4.6" r="3.9" fill="#f2f2f2" stroke="#5a5a5a" stroke-width=".9"/><path d="M2.7 3 v3.2 l2.7 -1.6z" fill="#333"/><rect x="5.7" y="3" width=".7" height="3.2" fill="#333"/></svg>
<div class="a" style="left:267.7px;top:499.8px;width:0;height:0;border-left:2.4px solid transparent;border-right:2.4px solid transparent;border-top:4px solid #666"></div>
<svg class="a" style="left:290.8px;top:496.6px;overflow:visible" width="8" height="7.4" viewBox="0 0 8 7.4"><path d="M4 7 L0.6 3.4 q-1 -1.6 0.2 -2.6 q1.6 -1.2 3.2 0.8 q1.6 -2 3.2 -0.8 q1.2 1 0.2 2.6z" fill="#e8141c"/></svg>
<svg class="a" style="left:303.0px;top:489.6px;overflow:visible" width="387.0" height="22.2" viewBox="0 0 387.0 22.2"><defs><linearGradient id="ag" gradientUnits="userSpaceOnUse" x1="0" y1="0" x2="0" y2="22.2"><stop offset="0" stop-color="#808080"/><stop offset="1" stop-color="#c8c8c8"/></linearGradient><pattern id="ap" patternUnits="userSpaceOnUse" width="3.05" height="1.7"><rect x="2.2" y="0" width="0.85" height="1.7" fill="#ececec"/><rect x="0" y="1.15" width="3.05" height="0.55" fill="#ececec"/></pattern></defs><rect x="0" y="0" width="387.0" height="22.2" fill="#d6d6d6"/><rect x="27.45" y="14.69" width="3.05" height="7.51" fill="#c2c2c2"/><rect x="33.55" y="10.84" width="3.05" height="11.36" fill="#c2c2c2"/><rect x="36.60" y="15.62" width="3.05" height="6.58" fill="#c2c2c2"/><rect x="39.65" y="15.83" width="3.05" height="6.37" fill="#c2c2c2"/><rect x="42.70" y="15.50" width="3.05" height="6.70" fill="#c2c2c2"/><rect x="45.75" y="11.95" width="3.05" height="10.25" fill="#c2c2c2"/><rect x="51.85" y="13.97" width="3.05" height="8.23" fill="#c2c2c2"/><rect x="64.05" y="6.44" width="3.05" height="15.76" fill="#c2c2c2"/><rect x="67.10" y="7.62" width="3.05" height="14.58" fill="#c2c2c2"/><rect x="70.15" y="14.76" width="3.05" height="7.44" fill="#c2c2c2"/><rect x="73.20" y="13.12" width="3.05" height="9.08" fill="#c2c2c2"/><rect x="79.30" y="10.38" width="3.05" height="11.82" fill="#c2c2c2"/><rect x="85.40" y="10.72" width="3.05" height="11.48" fill="#c2c2c2"/><rect x="88.45" y="15.60" width="3.05" height="6.60" fill="#c2c2c2"/><rect x="91.50" y="9.40" width="3.05" height="12.80" fill="#c2c2c2"/><rect x="94.55" y="13.06" width="3.05" height="9.14" fill="#c2c2c2"/><rect x="100.65" y="13.20" width="3.05" height="9.00" fill="#c2c2c2"/><rect x="109.80" y="10.46" width="3.05" height="11.74" fill="#c2c2c2"/><rect x="112.85" y="7.45" width="3.05" height="14.75" fill="#c2c2c2"/><rect x="118.95" y="6.40" width="3.05" height="15.80" fill="#c2c2c2"/><rect x="122.00" y="12.02" width="3.05" height="10.18" fill="#c2c2c2"/><rect x="128.10" y="11.31" width="3.05" height="10.89" fill="#c2c2c2"/><rect x="131.15" y="9.52" width="3.05" height="12.68" fill="#c2c2c2"/><rect x="143.35" y="9.25" width="3.05" height="12.95" fill="#c2c2c2"/><rect x="152.50" y="7.80" width="3.05" height="14.40" fill="#c2c2c2"/><rect x="158.60" y="9.56" width="3.05" height="12.64" fill="#c2c2c2"/><rect x="161.65" y="9.19" width="3.05" height="13.01" fill="#c2c2c2"/><rect x="173.85" y="12.34" width="3.05" height="9.86" fill="#c2c2c2"/><rect x="179.95" y="11.58" width="3.05" height="10.62" fill="#c2c2c2"/><rect x="183.00" y="15.03" width="3.05" height="7.17" fill="#c2c2c2"/><rect x="186.05" y="8.52" width="3.05" height="13.68" fill="#c2c2c2"/><rect x="189.10" y="13.72" width="3.05" height="8.48" fill="#c2c2c2"/><rect x="192.15" y="7.49" width="3.05" height="14.71" fill="#c2c2c2"/><rect x="195.20" y="11.71" width="3.05" height="10.49" fill="#c2c2c2"/><rect x="198.25" y="7.37" width="3.05" height="14.83" fill="#c2c2c2"/><rect x="207.40" y="12.05" width="3.05" height="10.15" fill="#c2c2c2"/><rect x="210.45" y="7.36" width="3.05" height="14.84" fill="#c2c2c2"/><rect x="216.55" y="14.44" width="3.05" height="7.76" fill="#c2c2c2"/><rect x="219.60" y="13.87" width="3.05" height="8.33" fill="#c2c2c2"/><rect x="222.65" y="10.31" width="3.05" height="11.89" fill="#c2c2c2"/><rect x="225.70" y="16.16" width="3.05" height="6.04" fill="#c2c2c2"/><rect x="228.75" y="12.51" width="3.05" height="9.69" fill="#c2c2c2"/><rect x="240.95" y="10.02" width="3.05" height="12.18" fill="#c2c2c2"/><rect x="247.05" y="7.20" width="3.05" height="15.00" fill="#c2c2c2"/><rect x="259.25" y="12.21" width="3.05" height="9.99" fill="#c2c2c2"/><rect x="262.30" y="9.86" width="3.05" height="12.34" fill="#c2c2c2"/><rect x="265.35" y="15.53" width="3.05" height="6.67" fill="#c2c2c2"/><rect x="268.40" y="14.58" width="3.05" height="7.62" fill="#c2c2c2"/><rect x="271.45" y="15.67" width="3.05" height="6.53" fill="#c2c2c2"/><rect x="274.50" y="14.69" width="3.05" height="7.51" fill="#c2c2c2"/><rect x="277.55" y="12.56" width="3.05" height="9.64" fill="#c2c2c2"/><rect x="280.60" y="7.46" width="3.05" height="14.74" fill="#c2c2c2"/><rect x="286.70" y="13.68" width="3.05" height="8.52" fill="#c2c2c2"/><rect x="289.75" y="12.56" width="3.05" height="9.64" fill="#c2c2c2"/><rect x="292.80" y="7.71" width="3.05" height="14.49" fill="#c2c2c2"/><rect x="298.90" y="11.36" width="3.05" height="10.84" fill="#c2c2c2"/><rect x="301.95" y="15.18" width="3.05" height="7.02" fill="#c2c2c2"/><rect x="305.00" y="13.55" width="3.05" height="8.65" fill="#c2c2c2"/><rect x="311.10" y="15.97" width="3.05" height="6.23" fill="#c2c2c2"/><rect x="317.20" y="14.73" width="3.05" height="7.47" fill="#c2c2c2"/><rect x="320.25" y="15.93" width="3.05" height="6.27" fill="#c2c2c2"/><rect x="323.30" y="6.41" width="3.05" height="15.79" fill="#c2c2c2"/><rect x="332.45" y="12.53" width="3.05" height="9.67" fill="#c2c2c2"/><rect x="335.50" y="8.48" width="3.05" height="13.72" fill="#c2c2c2"/><rect x="338.55" y="8.41" width="3.05" height="13.79" fill="#c2c2c2"/><rect x="341.60" y="13.97" width="3.05" height="8.23" fill="#c2c2c2"/><rect x="0.00" y="2.00" width="3.05" height="20.20" fill="url(#ag)"/><rect x="0.00" y="0.30" width="3.05" height="1.7" fill="#3a3a3a"/><rect x="3.05" y="2.00" width="3.05" height="20.20" fill="url(#ag)"/><rect x="3.05" y="0.30" width="3.05" height="1.7" fill="#3a3a3a"/><rect x="6.10" y="2.00" width="3.05" height="20.20" fill="url(#ag)"/><rect x="6.10" y="0.30" width="3.05" height="1.7" fill="#3a3a3a"/><rect x="9.15" y="2.00" width="3.05" height="20.20" fill="url(#ag)"/><rect x="9.15" y="0.30" width="3.05" height="1.7" fill="#3a3a3a"/><rect x="12.20" y="5.40" width="3.05" height="16.80" fill="url(#ag)"/><rect x="12.20" y="3.70" width="3.05" height="1.7" fill="#3a3a3a"/><rect x="15.25" y="3.70" width="3.05" height="18.50" fill="url(#ag)"/><rect x="15.25" y="2.00" width="3.05" height="1.7" fill="#3a3a3a"/><rect x="18.30" y="2.00" width="3.05" height="20.20" fill="url(#ag)"/><rect x="18.30" y="0.30" width="3.05" height="1.7" fill="#3a3a3a"/><rect x="21.35" y="3.70" width="3.05" height="18.50" fill="url(#ag)"/><rect x="21.35" y="2.00" width="3.05" height="1.7" fill="#3a3a3a"/><rect x="24.40" y="5.40" width="3.05" height="16.80" fill="url(#ag)"/><rect x="24.40" y="3.70" width="3.05" height="1.7" fill="#3a3a3a"/><rect x="27.45" y="10.50" width="3.05" height="11.70" fill="url(#ag)"/><rect x="27.45" y="8.80" width="3.05" height="1.7" fill="#3a3a3a"/><rect x="30.50" y="12.20" width="3.05" height="10.00" fill="url(#ag)"/><rect x="30.50" y="10.50" width="3.05" height="1.7" fill="#3a3a3a"/><rect x="33.55" y="10.50" width="3.05" height="11.70" fill="url(#ag)"/><rect x="33.55" y="8.80" width="3.05" height="1.7" fill="#3a3a3a"/><rect x="36.60" y="10.50" width="3.05" height="11.70" fill="url(#ag)"/><rect x="36.60" y="8.80" width="3.05" height="1.7" fill="#3a3a3a"/><rect x="39.65" y="10.50" width="3.05" height="11.70" fill="url(#ag)"/><rect x="39.65" y="8.80" width="3.05" height="1.7" fill="#3a3a3a"/><rect x="42.70" y="12.20" width="3.05" height="10.00" fill="url(#ag)"/><rect x="42.70" y="10.50" width="3.05" height="1.7" fill="#3a3a3a"/><rect x="45.75" y="12.20" width="3.05" height="10.00" fill="url(#ag)"/><rect x="45.75" y="10.50" width="3.05" height="1.7" fill="#3a3a3a"/><rect x="48.80" y="12.20" width="3.05" height="10.00" fill="url(#ag)"/><rect x="48.80" y="10.50" width="3.05" height="1.7" fill="#3a3a3a"/><rect x="51.85" y="10.50" width="3.05" height="11.70" fill="url(#ag)"/><rect x="51.85" y="8.80" width="3.05" height="1.7" fill="#3a3a3a"/><rect x="54.90" y="7.10" width="3.05" height="15.10" fill="url(#ag)"/><rect x="54.90" y="5.40" width="3.05" height="1.7" fill="#3a3a3a"/><rect x="57.95" y="10.50" width="3.05" height="11.70" fill="url(#ag)"/><rect x="57.95" y="8.80" width="3.05" height="1.7" fill="#3a3a3a"/><rect x="61.00" y="10.50" width="3.05" height="11.70" fill="url(#ag)"/><rect x="61.00" y="8.80" width="3.05" height="1.7" fill="#3a3a3a"/><rect x="64.05" y="7.10" width="3.05" height="15.10" fill="url(#ag)"/><rect x="64.05" y="5.40" width="3.05" height="1.7" fill="#3a3a3a"/><rect x="67.10" y="5.40" width="3.05" height="16.80" fill="url(#ag)"/><rect x="67.10" y="3.70" width="3.05" height="1.7" fill="#3a3a3a"/><rect x="70.15" y="5.40" width="3.05" height="16.80" fill="url(#ag)"/><rect x="70.15" y="3.70" width="3.05" height="1.7" fill="#3a3a3a"/><rect x="73.20" y="7.10" width="3.05" height="15.10" fill="url(#ag)"/><rect x="73.20" y="5.40" width="3.05" height="1.7" fill="#3a3a3a"/><rect x="76.25" y="10.50" width="3.05" height="11.70" fill="url(#ag)"/><rect x="76.25" y="8.80" width="3.05" height="1.7" fill="#3a3a3a"/><rect x="79.30" y="13.90" width="3.05" height="8.30" fill="url(#ag)"/><rect x="79.30" y="12.20" width="3.05" height="1.7" fill="#3a3a3a"/><rect x="82.35" y="13.90" width="3.05" height="8.30" fill="url(#ag)"/><rect x="82.35" y="12.20" width="3.05" height="1.7" fill="#3a3a3a"/><rect x="85.40" y="12.20" width="3.05" height="10.00" fill="url(#ag)"/><rect x="85.40" y="10.50" width="3.05" height="1.7" fill="#3a3a3a"/><rect x="88.45" y="10.50" width="3.05" height="11.70" fill="url(#ag)"/><rect x="88.45" y="8.80" width="3.05" height="1.7" fill="#3a3a3a"/><rect x="91.50" y="12.20" width="3.05" height="10.00" fill="url(#ag)"/><rect x="91.50" y="10.50" width="3.05" height="1.7" fill="#3a3a3a"/><rect x="94.55" y="12.20" width="3.05" height="10.00" fill="url(#ag)"/><rect x="94.55" y="10.50" width="3.05" height="1.7" fill="#3a3a3a"/><rect x="97.60" y="17.30" width="3.05" height="4.90" fill="url(#ag)"/><rect x="97.60" y="15.60" width="3.05" height="1.7" fill="#3a3a3a"/><rect x="100.65" y="17.30" width="3.05" height="4.90" fill="url(#ag)"/><rect x="100.65" y="15.60" width="3.05" height="1.7" fill="#3a3a3a"/><rect x="103.70" y="13.90" width="3.05" height="8.30" fill="url(#ag)"/><rect x="103.70" y="12.20" width="3.05" height="1.7" fill="#3a3a3a"/><rect x="106.75" y="13.90" width="3.05" height="8.30" fill="url(#ag)"/><rect x="106.75" y="12.20" width="3.05" height="1.7" fill="#3a3a3a"/><rect x="109.80" y="22.40" width="3.05" height="-0.20" fill="url(#ag)"/><rect x="109.80" y="20.70" width="3.05" height="1.7" fill="#3a3a3a"/><rect x="112.85" y="19.00" width="3.05" height="3.20" fill="url(#ag)"/><rect x="112.85" y="17.30" width="3.05" height="1.7" fill="#3a3a3a"/><rect x="115.90" y="19.00" width="3.05" height="3.20" fill="url(#ag)"/><rect x="115.90" y="17.30" width="3.05" height="1.7" fill="#3a3a3a"/><rect x="118.95" y="20.70" width="3.05" height="1.50" fill="url(#ag)"/><rect x="118.95" y="19.00" width="3.05" height="1.7" fill="#3a3a3a"/><rect x="122.00" y="10.50" width="3.05" height="11.70" fill="url(#ag)"/><rect x="122.00" y="8.80" width="3.05" height="1.7" fill="#3a3a3a"/><rect x="125.05" y="22.40" width="3.05" height="-0.20" fill="url(#ag)"/><rect x="125.05" y="20.70" width="3.05" height="1.7" fill="#3a3a3a"/><rect x="128.10" y="19.00" width="3.05" height="3.20" fill="url(#ag)"/><rect x="128.10" y="17.30" width="3.05" height="1.7" fill="#3a3a3a"/><rect x="131.15" y="22.40" width="3.05" height="-0.20" fill="url(#ag)"/><rect x="131.15" y="20.70" width="3.05" height="1.7" fill="#3a3a3a"/><rect x="134.20" y="22.40" width="3.05" height="-0.20" fill="url(#ag)"/><rect x="134.20" y="20.70" width="3.05" height="1.7" fill="#3a3a3a"/><rect x="137.25" y="22.40" width="3.05" height="-0.20" fill="url(#ag)"/><rect x="137.25" y="20.70" width="3.05" height="1.7" fill="#3a3a3a"/><rect x="140.30" y="17.30" width="3.05" height="4.90" fill="url(#ag)"/><rect x="140.30" y="15.60" width="3.05" height="1.7" fill="#3a3a3a"/><rect x="143.35" y="17.30" width="3.05" height="4.90" fill="url(#ag)"/><rect x="143.35" y="15.60" width="3.05" height="1.7" fill="#3a3a3a"/><rect x="146.40" y="22.40" width="3.05" height="-0.20" fill="url(#ag)"/><rect x="146.40" y="20.70" width="3.05" height="1.7" fill="#3a3a3a"/><rect x="149.45" y="17.10" width="3.05" height="5.10" fill="#c4c4c4"/><rect x="152.50" y="17.10" width="3.05" height="5.10" fill="#c4c4c4"/><rect x="155.55" y="20.70" width="3.05" height="1.50" fill="url(#ag)"/><rect x="155.55" y="19.00" width="3.05" height="1.7" fill="#3a3a3a"/><rect x="158.60" y="19.00" width="3.05" height="3.20" fill="url(#ag)"/><rect x="158.60" y="17.30" width="3.05" height="1.7" fill="#3a3a3a"/><rect x="161.65" y="19.00" width="3.05" height="3.20" fill="url(#ag)"/><rect x="161.65" y="17.30" width="3.05" height="1.7" fill="#3a3a3a"/><rect x="164.70" y="20.70" width="3.05" height="1.50" fill="url(#ag)"/><rect x="164.70" y="19.00" width="3.05" height="1.7" fill="#3a3a3a"/><rect x="167.75" y="20.70" width="3.05" height="1.50" fill="url(#ag)"/><rect x="167.75" y="19.00" width="3.05" height="1.7" fill="#3a3a3a"/><rect x="170.80" y="22.40" width="3.05" height="-0.20" fill="url(#ag)"/><rect x="170.80" y="20.70" width="3.05" height="1.7" fill="#3a3a3a"/><rect x="173.85" y="20.70" width="3.05" height="1.50" fill="url(#ag)"/><rect x="173.85" y="19.00" width="3.05" height="1.7" fill="#3a3a3a"/><rect x="176.90" y="19.00" width="3.05" height="3.20" fill="url(#ag)"/><rect x="176.90" y="17.30" width="3.05" height="1.7" fill="#3a3a3a"/><rect x="179.95" y="17.10" width="3.05" height="5.10" fill="#c4c4c4"/><rect x="183.00" y="22.40" width="3.05" height="-0.20" fill="url(#ag)"/><rect x="183.00" y="20.70" width="3.05" height="1.7" fill="#3a3a3a"/><rect x="186.05" y="22.40" width="3.05" height="-0.20" fill="url(#ag)"/><rect x="186.05" y="20.70" width="3.05" height="1.7" fill="#3a3a3a"/><rect x="189.10" y="22.40" width="3.05" height="-0.20" fill="url(#ag)"/><rect x="189.10" y="20.70" width="3.05" height="1.7" fill="#3a3a3a"/><rect x="192.15" y="17.10" width="3.05" height="5.10" fill="#c4c4c4"/><rect x="195.20" y="17.10" width="3.05" height="5.10" fill="#c4c4c4"/><rect x="198.25" y="17.10" width="3.05" height="5.10" fill="#c4c4c4"/><rect x="201.30" y="17.10" width="3.05" height="5.10" fill="#c4c4c4"/><rect x="204.35" y="17.10" width="3.05" height="5.10" fill="#c4c4c4"/><rect x="207.40" y="22.40" width="3.05" height="-0.20" fill="url(#ag)"/><rect x="207.40" y="20.70" width="3.05" height="1.7" fill="#3a3a3a"/><rect x="210.45" y="19.00" width="3.05" height="3.20" fill="url(#ag)"/><rect x="210.45" y="17.30" width="3.05" height="1.7" fill="#3a3a3a"/><rect x="213.50" y="17.10" width="3.05" height="5.10" fill="#c4c4c4"/><rect x="216.55" y="17.10" width="3.05" height="5.10" fill="#c4c4c4"/><rect x="219.60" y="17.10" width="3.05" height="5.10" fill="#c4c4c4"/><rect x="222.65" y="17.10" width="3.05" height="5.10" fill="#c4c4c4"/><rect x="225.70" y="22.40" width="3.05" height="-0.20" fill="url(#ag)"/><rect x="225.70" y="20.70" width="3.05" height="1.7" fill="#3a3a3a"/><rect x="228.75" y="17.30" width="3.05" height="4.90" fill="url(#ag)"/><rect x="228.75" y="15.60" width="3.05" height="1.7" fill="#3a3a3a"/><rect x="231.80" y="22.40" width="3.05" height="-0.20" fill="url(#ag)"/><rect x="231.80" y="20.70" width="3.05" height="1.7" fill="#3a3a3a"/><rect x="234.85" y="22.40" width="3.05" height="-0.20" fill="url(#ag)"/><rect x="234.85" y="20.70" width="3.05" height="1.7" fill="#3a3a3a"/><rect x="237.90" y="17.10" width="3.05" height="5.10" fill="#c4c4c4"/><rect x="240.95" y="20.70" width="3.05" height="1.50" fill="url(#ag)"/><rect x="240.95" y="19.00" width="3.05" height="1.7" fill="#3a3a3a"/><rect x="244.00" y="17.30" width="3.05" height="4.90" fill="url(#ag)"/><rect x="244.00" y="15.60" width="3.05" height="1.7" fill="#3a3a3a"/><rect x="247.05" y="20.70" width="3.05" height="1.50" fill="url(#ag)"/><rect x="247.05" y="19.00" width="3.05" height="1.7" fill="#3a3a3a"/><rect x="250.10" y="19.00" width="3.05" height="3.20" fill="url(#ag)"/><rect x="250.10" y="17.30" width="3.05" height="1.7" fill="#3a3a3a"/><rect x="253.15" y="17.10" width="3.05" height="5.10" fill="#c4c4c4"/><rect x="256.20" y="17.10" width="3.05" height="5.10" fill="#c4c4c4"/><rect x="259.25" y="20.70" width="3.05" height="1.50" fill="url(#ag)"/><rect x="259.25" y="19.00" width="3.05" height="1.7" fill="#3a3a3a"/><rect x="262.30" y="19.00" width="3.05" height="3.20" fill="url(#ag)"/><rect x="262.30" y="17.30" width="3.05" height="1.7" fill="#3a3a3a"/><rect x="265.35" y="20.70" width="3.05" height="1.50" fill="url(#ag)"/><rect x="265.35" y="19.00" width="3.05" height="1.7" fill="#3a3a3a"/><rect x="268.40" y="17.10" width="3.05" height="5.10" fill="#c4c4c4"/><rect x="271.45" y="17.10" width="3.05" height="5.10" fill="#c4c4c4"/><rect x="274.50" y="17.10" width="3.05" height="5.10" fill="#c4c4c4"/><rect x="277.55" y="22.40" width="3.05" height="-0.20" fill="url(#ag)"/><rect x="277.55" y="20.70" width="3.05" height="1.7" fill="#3a3a3a"/><rect x="280.60" y="22.40" width="3.05" height="-0.20" fill="url(#ag)"/><rect x="280.60" y="20.70" width="3.05" height="1.7" fill="#3a3a3a"/><rect x="283.65" y="17.10" width="3.05" height="5.10" fill="#c4c4c4"/><rect x="286.70" y="17.10" width="3.05" height="5.10" fill="#c4c4c4"/><rect x="289.75" y="17.10" width="3.05" height="5.10" fill="#c4c4c4"/><rect x="292.80" y="17.10" width="3.05" height="5.10" fill="#c4c4c4"/><rect x="295.85" y="20.70" width="3.05" height="1.50" fill="url(#ag)"/><rect x="295.85" y="19.00" width="3.05" height="1.7" fill="#3a3a3a"/><rect x="298.90" y="17.10" width="3.05" height="5.10" fill="#c4c4c4"/><rect x="301.95" y="17.10" width="3.05" height="5.10" fill="#c4c4c4"/><rect x="305.00" y="17.10" width="3.05" height="5.10" fill="#c4c4c4"/><rect x="308.05" y="17.10" width="3.05" height="5.10" fill="#c4c4c4"/><rect x="311.10" y="17.10" width="3.05" height="5.10" fill="#c4c4c4"/><rect x="314.15" y="17.10" width="3.05" height="5.10" fill="#c4c4c4"/><rect x="317.20" y="17.10" width="3.05" height="5.10" fill="#c4c4c4"/><rect x="320.25" y="17.10" width="3.05" height="5.10" fill="#c4c4c4"/><rect x="323.30" y="20.70" width="3.05" height="1.50" fill="url(#ag)"/><rect x="323.30" y="19.00" width="3.05" height="1.7" fill="#3a3a3a"/><rect x="326.35" y="17.10" width="3.05" height="5.10" fill="#c4c4c4"/><rect x="329.40" y="20.70" width="3.05" height="1.50" fill="url(#ag)"/><rect x="329.40" y="19.00" width="3.05" height="1.7" fill="#3a3a3a"/><rect x="332.45" y="17.10" width="3.05" height="5.10" fill="#c4c4c4"/><rect x="335.50" y="19.00" width="3.05" height="3.20" fill="url(#ag)"/><rect x="335.50" y="17.30" width="3.05" height="1.7" fill="#3a3a3a"/><rect x="338.55" y="17.10" width="3.05" height="5.10" fill="#c4c4c4"/><rect x="341.60" y="17.10" width="3.05" height="5.10" fill="#c4c4c4"/><rect x="344.65" y="17.10" width="3.05" height="5.10" fill="#c4c4c4"/><rect x="347.70" y="17.10" width="3.05" height="5.10" fill="#c4c4c4"/><rect x="350.75" y="17.10" width="3.05" height="5.10" fill="#c4c4c4"/><rect x="353.80" y="17.10" width="3.05" height="5.10" fill="#c4c4c4"/><rect x="356.85" y="17.10" width="3.05" height="5.10" fill="#c4c4c4"/><rect x="359.90" y="17.10" width="3.05" height="5.10" fill="#c4c4c4"/><rect x="362.95" y="17.10" width="3.05" height="5.10" fill="#c4c4c4"/><rect x="366.00" y="17.10" width="3.05" height="5.10" fill="#c4c4c4"/><rect x="369.05" y="17.10" width="3.05" height="5.10" fill="#c4c4c4"/><rect x="372.10" y="17.10" width="3.05" height="5.10" fill="#c4c4c4"/><rect x="375.15" y="17.10" width="3.05" height="5.10" fill="#c4c4c4"/><rect x="378.20" y="17.10" width="3.05" height="5.10" fill="#c4c4c4"/><rect x="381.25" y="17.10" width="3.05" height="5.10" fill="#c4c4c4"/><rect x="384.30" y="17.10" width="3.05" height="5.10" fill="#c4c4c4"/><rect x="-0.80" y="0" width="0.8" height="22.2" fill="#e6e6e6"/><rect x="2.25" y="0" width="0.8" height="22.2" fill="#e6e6e6"/><rect x="5.30" y="0" width="0.8" height="22.2" fill="#e6e6e6"/><rect x="8.35" y="0" width="0.8" height="22.2" fill="#e6e6e6"/><rect x="11.40" y="0" width="0.8" height="22.2" fill="#e6e6e6"/><rect x="14.45" y="0" width="0.8" height="22.2" fill="#e6e6e6"/><rect x="17.50" y="0" width="0.8" height="22.2" fill="#e6e6e6"/><rect x="20.55" y="0" width="0.8" height="22.2" fill="#e6e6e6"/><rect x="23.60" y="0" width="0.8" height="22.2" fill="#e6e6e6"/><rect x="26.65" y="0" width="0.8" height="22.2" fill="#e6e6e6"/><rect x="29.70" y="0" width="0.8" height="22.2" fill="#e6e6e6"/><rect x="32.75" y="0" width="0.8" height="22.2" fill="#e6e6e6"/><rect x="35.80" y="0" width="0.8" height="22.2" fill="#e6e6e6"/><rect x="38.85" y="0" width="0.8" height="22.2" fill="#e6e6e6"/><rect x="41.90" y="0" width="0.8" height="22.2" fill="#e6e6e6"/><rect x="44.95" y="0" width="0.8" height="22.2" fill="#e6e6e6"/><rect x="48.00" y="0" width="0.8" height="22.2" fill="#e6e6e6"/><rect x="51.05" y="0" width="0.8" height="22.2" fill="#e6e6e6"/><rect x="54.10" y="0" width="0.8" height="22.2" fill="#e6e6e6"/><rect x="57.15" y="0" width="0.8" height="22.2" fill="#e6e6e6"/><rect x="60.20" y="0" width="0.8" height="22.2" fill="#e6e6e6"/><rect x="63.25" y="0" width="0.8" height="22.2" fill="#e6e6e6"/><rect x="66.30" y="0" width="0.8" height="22.2" fill="#e6e6e6"/><rect x="69.35" y="0" width="0.8" height="22.2" fill="#e6e6e6"/><rect x="72.40" y="0" width="0.8" height="22.2" fill="#e6e6e6"/><rect x="75.45" y="0" width="0.8" height="22.2" fill="#e6e6e6"/><rect x="78.50" y="0" width="0.8" height="22.2" fill="#e6e6e6"/><rect x="81.55" y="0" width="0.8" height="22.2" fill="#e6e6e6"/><rect x="84.60" y="0" width="0.8" height="22.2" fill="#e6e6e6"/><rect x="87.65" y="0" width="0.8" height="22.2" fill="#e6e6e6"/><rect x="90.70" y="0" width="0.8" height="22.2" fill="#e6e6e6"/><rect x="93.75" y="0" width="0.8" height="22.2" fill="#e6e6e6"/><rect x="96.80" y="0" width="0.8" height="22.2" fill="#e6e6e6"/><rect x="99.85" y="0" width="0.8" height="22.2" fill="#e6e6e6"/><rect x="102.90" y="0" width="0.8" height="22.2" fill="#e6e6e6"/><rect x="105.95" y="0" width="0.8" height="22.2" fill="#e6e6e6"/><rect x="109.00" y="0" width="0.8" height="22.2" fill="#e6e6e6"/><rect x="112.05" y="0" width="0.8" height="22.2" fill="#e6e6e6"/><rect x="115.10" y="0" width="0.8" height="22.2" fill="#e6e6e6"/><rect x="118.15" y="0" width="0.8" height="22.2" fill="#e6e6e6"/><rect x="121.20" y="0" width="0.8" height="22.2" fill="#e6e6e6"/><rect x="124.25" y="0" width="0.8" height="22.2" fill="#e6e6e6"/><rect x="127.30" y="0" width="0.8" height="22.2" fill="#e6e6e6"/><rect x="130.35" y="0" width="0.8" height="22.2" fill="#e6e6e6"/><rect x="133.40" y="0" width="0.8" height="22.2" fill="#e6e6e6"/><rect x="136.45" y="0" width="0.8" height="22.2" fill="#e6e6e6"/><rect x="139.50" y="0" width="0.8" height="22.2" fill="#e6e6e6"/><rect x="142.55" y="0" width="0.8" height="22.2" fill="#e6e6e6"/><rect x="145.60" y="0" width="0.8" height="22.2" fill="#e6e6e6"/><rect x="148.65" y="0" width="0.8" height="22.2" fill="#e6e6e6"/><rect x="151.70" y="0" width="0.8" height="22.2" fill="#e6e6e6"/><rect x="154.75" y="0" width="0.8" height="22.2" fill="#e6e6e6"/><rect x="157.80" y="0" width="0.8" height="22.2" fill="#e6e6e6"/><rect x="160.85" y="0" width="0.8" height="22.2" fill="#e6e6e6"/><rect x="163.90" y="0" width="0.8" height="22.2" fill="#e6e6e6"/><rect x="166.95" y="0" width="0.8" height="22.2" fill="#e6e6e6"/><rect x="170.00" y="0" width="0.8" height="22.2" fill="#e6e6e6"/><rect x="173.05" y="0" width="0.8" height="22.2" fill="#e6e6e6"/><rect x="176.10" y="0" width="0.8" height="22.2" fill="#e6e6e6"/><rect x="179.15" y="0" width="0.8" height="22.2" fill="#e6e6e6"/><rect x="182.20" y="0" width="0.8" height="22.2" fill="#e6e6e6"/><rect x="185.25" y="0" width="0.8" height="22.2" fill="#e6e6e6"/><rect x="188.30" y="0" width="0.8" height="22.2" fill="#e6e6e6"/><rect x="191.35" y="0" width="0.8" height="22.2" fill="#e6e6e6"/><rect x="194.40" y="0" width="0.8" height="22.2" fill="#e6e6e6"/><rect x="197.45" y="0" width="0.8" height="22.2" fill="#e6e6e6"/><rect x="200.50" y="0" width="0.8" height="22.2" fill="#e6e6e6"/><rect x="203.55" y="0" width="0.8" height="22.2" fill="#e6e6e6"/><rect x="206.60" y="0" width="0.8" height="22.2" fill="#e6e6e6"/><rect x="209.65" y="0" width="0.8" height="22.2" fill="#e6e6e6"/><rect x="212.70" y="0" width="0.8" height="22.2" fill="#e6e6e6"/><rect x="215.75" y="0" width="0.8" height="22.2" fill="#e6e6e6"/><rect x="218.80" y="0" width="0.8" height="22.2" fill="#e6e6e6"/><rect x="221.85" y="0" width="0.8" height="22.2" fill="#e6e6e6"/><rect x="224.90" y="0" width="0.8" height="22.2" fill="#e6e6e6"/><rect x="227.95" y="0" width="0.8" height="22.2" fill="#e6e6e6"/><rect x="231.00" y="0" width="0.8" height="22.2" fill="#e6e6e6"/><rect x="234.05" y="0" width="0.8" height="22.2" fill="#e6e6e6"/><rect x="237.10" y="0" width="0.8" height="22.2" fill="#e6e6e6"/><rect x="240.15" y="0" width="0.8" height="22.2" fill="#e6e6e6"/><rect x="243.20" y="0" width="0.8" height="22.2" fill="#e6e6e6"/><rect x="246.25" y="0" width="0.8" height="22.2" fill="#e6e6e6"/><rect x="249.30" y="0" width="0.8" height="22.2" fill="#e6e6e6"/><rect x="252.35" y="0" width="0.8" height="22.2" fill="#e6e6e6"/><rect x="255.40" y="0" width="0.8" height="22.2" fill="#e6e6e6"/><rect x="258.45" y="0" width="0.8" height="22.2" fill="#e6e6e6"/><rect x="261.50" y="0" width="0.8" height="22.2" fill="#e6e6e6"/><rect x="264.55" y="0" width="0.8" height="22.2" fill="#e6e6e6"/><rect x="267.60" y="0" width="0.8" height="22.2" fill="#e6e6e6"/><rect x="270.65" y="0" width="0.8" height="22.2" fill="#e6e6e6"/><rect x="273.70" y="0" width="0.8" height="22.2" fill="#e6e6e6"/><rect x="276.75" y="0" width="0.8" height="22.2" fill="#e6e6e6"/><rect x="279.80" y="0" width="0.8" height="22.2" fill="#e6e6e6"/><rect x="282.85" y="0" width="0.8" height="22.2" fill="#e6e6e6"/><rect x="285.90" y="0" width="0.8" height="22.2" fill="#e6e6e6"/><rect x="288.95" y="0" width="0.8" height="22.2" fill="#e6e6e6"/><rect x="292.00" y="0" width="0.8" height="22.2" fill="#e6e6e6"/><rect x="295.05" y="0" width="0.8" height="22.2" fill="#e6e6e6"/><rect x="298.10" y="0" width="0.8" height="22.2" fill="#e6e6e6"/><rect x="301.15" y="0" width="0.8" height="22.2" fill="#e6e6e6"/><rect x="304.20" y="0" width="0.8" height="22.2" fill="#e6e6e6"/><rect x="307.25" y="0" width="0.8" height="22.2" fill="#e6e6e6"/><rect x="310.30" y="0" width="0.8" height="22.2" fill="#e6e6e6"/><rect x="313.35" y="0" width="0.8" height="22.2" fill="#e6e6e6"/><rect x="316.40" y="0" width="0.8" height="22.2" fill="#e6e6e6"/><rect x="319.45" y="0" width="0.8" height="22.2" fill="#e6e6e6"/><rect x="322.50" y="0" width="0.8" height="22.2" fill="#e6e6e6"/><rect x="325.55" y="0" width="0.8" height="22.2" fill="#e6e6e6"/><rect x="328.60" y="0" width="0.8" height="22.2" fill="#e6e6e6"/><rect x="331.65" y="0" width="0.8" height="22.2" fill="#e6e6e6"/><rect x="334.70" y="0" width="0.8" height="22.2" fill="#e6e6e6"/><rect x="337.75" y="0" width="0.8" height="22.2" fill="#e6e6e6"/><rect x="340.80" y="0" width="0.8" height="22.2" fill="#e6e6e6"/><rect x="343.85" y="0" width="0.8" height="22.2" fill="#e6e6e6"/><rect x="346.90" y="0" width="0.8" height="22.2" fill="#e6e6e6"/><rect x="349.95" y="0" width="0.8" height="22.2" fill="#e6e6e6"/><rect x="353.00" y="0" width="0.8" height="22.2" fill="#e6e6e6"/><rect x="356.05" y="0" width="0.8" height="22.2" fill="#e6e6e6"/><rect x="359.10" y="0" width="0.8" height="22.2" fill="#e6e6e6"/><rect x="362.15" y="0" width="0.8" height="22.2" fill="#e6e6e6"/><rect x="365.20" y="0" width="0.8" height="22.2" fill="#e6e6e6"/><rect x="368.25" y="0" width="0.8" height="22.2" fill="#e6e6e6"/><rect x="371.30" y="0" width="0.8" height="22.2" fill="#e6e6e6"/><rect x="374.35" y="0" width="0.8" height="22.2" fill="#e6e6e6"/><rect x="377.40" y="0" width="0.8" height="22.2" fill="#e6e6e6"/><rect x="380.45" y="0" width="0.8" height="22.2" fill="#e6e6e6"/><rect x="383.50" y="0" width="0.8" height="22.2" fill="#e6e6e6"/><rect x="386.55" y="0" width="0.8" height="22.2" fill="#e6e6e6"/><rect x="0" y="-0.20" width="387.0" height="0.5" fill="#e8e8e8"/><rect x="0" y="1.50" width="387.0" height="0.5" fill="#e8e8e8"/><rect x="0" y="3.20" width="387.0" height="0.5" fill="#e8e8e8"/><rect x="0" y="4.90" width="387.0" height="0.5" fill="#e8e8e8"/><rect x="0" y="6.60" width="387.0" height="0.5" fill="#e8e8e8"/><rect x="0" y="8.30" width="387.0" height="0.5" fill="#e8e8e8"/><rect x="0" y="10.00" width="387.0" height="0.5" fill="#e8e8e8"/><rect x="0" y="11.70" width="387.0" height="0.5" fill="#e8e8e8"/><rect x="0" y="13.40" width="387.0" height="0.5" fill="#e8e8e8"/><rect x="0" y="15.10" width="387.0" height="0.5" fill="#e8e8e8"/><rect x="0" y="16.80" width="387.0" height="0.5" fill="#e8e8e8"/><rect x="0" y="18.50" width="387.0" height="0.5" fill="#e8e8e8"/><rect x="0" y="20.20" width="387.0" height="0.5" fill="#e8e8e8"/><rect x="0" y="21.90" width="387.0" height="0.5" fill="#e8e8e8"/></svg>
<div class="t" style="left:702.4px;top:490.2px;font-size:5.2px;letter-spacing:0;color:#3a3a3a;-webkit-text-stroke:0.15px #3a3a3a">68%</div>
<svg class="a" style="left:695.5px;top:493px;overflow:visible" width="61" height="10.2" viewBox="0 0 61 10.2"><path d="M0.5 6.1 L59.9 0.5 V9.6 H0.5z" fill="#f3f0ed" stroke="#bdbdbd" stroke-width=".8"/><path d="M8.5 5.35 L40.8 2.3 V9.2 H8.5z" fill="#b9dbf5"/></svg>
<div class="a" style="left:696px;top:507px;width:60px;height:1px;background:#d3d0cc"></div>
<svg class="a" style="left:733.6px;top:504.6px;overflow:visible" width="7.4" height="4.8" viewBox="0 0 7.4 4.8"><path d="M0.6 4.2 L3.7 0.6 L6.8 4.2z" fill="#f6f6f6" stroke="#6a6a6a" stroke-width=".8"/></svg>
<div class="t" style="left:299.4px;top:518.1px">15 Titel - [ 1:07:52 ]</div>
<svg class="a" style="left:360.5px;top:518.8px;overflow:visible" width="16" height="6" viewBox="0 0 16 6"><rect x="0.5" y="0.5" width="6" height="4.5" fill="none" stroke="#d8d8d8" stroke-width=".7"/><rect x="8.5" y="0.5" width="6" height="4.5" fill="none" stroke="#d8d8d8" stroke-width=".7"/></svg>
<svg class="a" style="left:381.5px;top:518.3px;overflow:visible" width="7.5" height="7" viewBox="0 0 7.5 7"><circle cx="3.7" cy="3.5" r="3.2" fill="#f2b3c3"/><path d="M2 3.5 h3.4" stroke="#d2375e" stroke-width="1"/></svg>
<div class="t" style="left:401.8px;top:518.1px">1:02</div>
<div class="a" style="left:419.5px;top:521.2px;width:309.5px;height:1.4px;border-radius:1px;background:#c9c9c9"></div>
<div class="a" style="left:496.6px;top:517.1px;width:9.4px;height:9.4px;border-radius:50%;background:#fdfdfd;box-shadow:0 0 0 0.5px #c4c4c4,0 0.5px 1px rgba(0,0,0,.25)"></div>
<div class="t" style="left:736px;top:518.1px">4:04</div>
</div></body></html>
